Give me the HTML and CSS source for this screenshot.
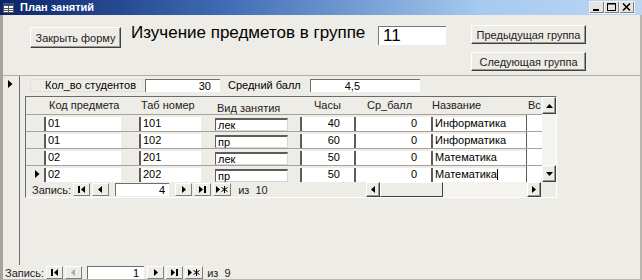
FILE: index.html
```html
<!DOCTYPE html>
<html lang="ru">
<head>
<meta charset="utf-8">
<title>План занятий</title>
<link rel="stylesheet" href="styles.css">
</head>
<body>
<div class="window">
  <div class="titlebar">
    <svg class="app-icon" width="11" height="10" viewBox="0 0 11 10">
      <rect x="0.5" y="0.5" width="10" height="9" fill="#fff" stroke="#555"/>
      <rect x="1" y="1" width="9" height="2" fill="#2a4aa0"/>
      <line x1="5.5" y1="3" x2="5.5" y2="9" stroke="#555"/>
      <line x1="1" y1="5.5" x2="10" y2="5.5" stroke="#555"/>
      <line x1="1" y1="7.5" x2="10" y2="7.5" stroke="#555"/>
    </svg>
    <span class="title">План занятий</span>
    <div class="wbtns">
      <span class="wbtn"><svg width="13" height="10" viewBox="0 0 13 10"><rect x="3" y="7" width="6" height="2" fill="#000"/></svg></span>
      <span class="wbtn"><svg width="13" height="10" viewBox="0 0 13 10"><rect x="2.5" y="1.5" width="8" height="7" fill="none" stroke="#000"/><line x1="2.5" y1="2" x2="10.5" y2="2" stroke="#000"/></svg></span>
      <span class="wbtn"><svg width="13" height="10" viewBox="0 0 13 10"><path d="M3 1.5 L10 8.5 M10 1.5 L3 8.5" stroke="#000" stroke-width="1.6"/></svg></span>
    </div>
  </div>
  <div class="client">
    <div class="form-header">
      <button class="btn btn-close">Закрыть форму</button>
      <div class="heading">Изучение предметов в группе</div>
      <div class="group-box">11</div>
      <div class="group-nav">
        <button class="btn btn-group">Предыдущая группа</button>
        <button class="btn btn-group">Следующая группа</button>
      </div>
    </div>
    <div class="detail">
      <div class="selector">
        <svg class="sel-arrow" width="5" height="8" viewBox="0 0 5 8"><path d="M0 0 L4.5 4 L0 8 Z" fill="#000"/></svg>
      </div>
      <div class="detail-body">
        <div class="stats">
          <div class="stat-label stat-label-1">Кол_во студентов</div>
          <div class="field field-num field-1">30</div>
          <div class="stat-label stat-label-2">Средний балл</div>
          <div class="field field-num field-2">4,5</div>
        </div>
        <div class="subform">
          <div class="sf-top">
            <div class="sf-main">
              <div class="sf-row sf-head">
                <div class="c c-sel"></div>
                <div class="c c1">Код предмета</div>
                <div class="gap g1"></div>
                <div class="c c2">Таб номер</div>
                <div class="gap g2"></div>
                <div class="c c3">Вид занятия</div>
                <div class="gap g3"></div>
                <div class="c c4">Часы</div>
                <div class="c c5">Ср_балл</div>
                <div class="c c6">Название</div>
                <div class="c c7">Вс</div>
              </div>
              <div class="sf-row rec">
                <div class="c c-sel"></div>
                <div class="c c1 cell">01</div>
                <div class="gap g1"></div>
                <div class="c c2 cell">101</div>
                <div class="gap g2"></div>
                <div class="c c3"><div class="box">лек</div></div>
                <div class="gap g3"></div>
                <div class="c c4 cell num">40</div>
                <div class="c c5 cell num">0</div>
                <div class="c c6 cell">Информатика</div>
                <div class="c c7 cell"></div>
              </div>
              <div class="sf-row rec">
                <div class="c c-sel"></div>
                <div class="c c1 cell">01</div>
                <div class="gap g1"></div>
                <div class="c c2 cell">102</div>
                <div class="gap g2"></div>
                <div class="c c3"><div class="box">пр</div></div>
                <div class="gap g3"></div>
                <div class="c c4 cell num">60</div>
                <div class="c c5 cell num">0</div>
                <div class="c c6 cell">Информатика</div>
                <div class="c c7 cell"></div>
              </div>
              <div class="sf-row rec">
                <div class="c c-sel"></div>
                <div class="c c1 cell">02</div>
                <div class="gap g1"></div>
                <div class="c c2 cell">201</div>
                <div class="gap g2"></div>
                <div class="c c3"><div class="box">лек</div></div>
                <div class="gap g3"></div>
                <div class="c c4 cell num">50</div>
                <div class="c c5 cell num">0</div>
                <div class="c c6 cell">Математика</div>
                <div class="c c7 cell"></div>
              </div>
              <div class="sf-row rec">
                <div class="c c-sel"><svg class="row-arrow" width="5" height="8" viewBox="0 0 5 8"><path d="M0 0 L4.5 4 L0 8 Z" fill="#000"/></svg></div>
                <div class="c c1 cell">02</div>
                <div class="gap g1"></div>
                <div class="c c2 cell">202</div>
                <div class="gap g2"></div>
                <div class="c c3"><div class="box">пр</div></div>
                <div class="gap g3"></div>
                <div class="c c4 cell num">50</div>
                <div class="c c5 cell num">0</div>
                <div class="c c6 cell">Математика<span class="caret"></span></div>
                <div class="c c7 cell"></div>
              </div>
            </div>
            <div class="vscroll">
              <div class="sb-btn"><svg width="7" height="4" viewBox="0 0 7 4"><path d="M0 4 L3.5 0 L7 4 Z" fill="#000"/></svg></div>
              <div class="sb-track"></div>
              <div class="sb-btn"><svg width="7" height="4" viewBox="0 0 7 4"><path d="M0 0 L3.5 4 L7 0 Z" fill="#000"/></svg></div>
            </div>
          </div>
          <div class="sf-nav">
            <div class="recnav">
              <span class="nav-label">Запись:</span>
              <span class="nbtn"><svg width="9" height="7" viewBox="0 0 9 7"><rect x="1" y="0" width="2" height="7" fill="#000"/><path d="M8 0 L4 3.5 L8 7 Z" fill="#000"/></svg></span>
              <span class="nbtn"><svg width="9" height="7" viewBox="0 0 9 7"><path d="M6 0 L2 3.5 L6 7 Z" fill="#000"/></svg></span>
              <span class="nbox nbox-sub">4</span>
              <span class="nbtn"><svg width="9" height="7" viewBox="0 0 9 7"><path d="M3 0 L7 3.5 L3 7 Z" fill="#000"/></svg></span>
              <span class="nbtn"><svg width="9" height="7" viewBox="0 0 9 7"><path d="M1 0 L5 3.5 L1 7 Z" fill="#000"/><rect x="6" y="0" width="2" height="7" fill="#000"/></svg></span>
              <span class="nbtn nbtn-new"><svg width="12" height="7" viewBox="0 0 12 7"><path d="M0 0 L4 3.5 L0 7 Z" fill="#000"/><path d="M8.5 0 V7 M5.5 1.5 L11.5 5.5 M11.5 1.5 L5.5 5.5" stroke="#000" stroke-width="1"/></svg></span>
              <span class="nav-count nav-count-sub">из&nbsp; 10</span>
            </div>
            <div class="hscroll">
              <div class="hs-btn"><svg width="4" height="7" viewBox="0 0 4 7"><path d="M4 0 L0 3.5 L4 7 Z" fill="#000"/></svg></div>
              <div class="hs-thumb"></div>
              <div class="hs-track"></div>
              <div class="hs-btn"><svg width="4" height="7" viewBox="0 0 4 7"><path d="M0 0 L4 3.5 L0 7 Z" fill="#000"/></svg></div>
            </div>
            <div class="sf-corner"></div>
          </div>
        </div>
      </div>
    </div>
    <div class="recnav main-nav">
      <span class="nav-label">Запись:</span>
      <span class="nbtn"><svg width="9" height="7" viewBox="0 0 9 7"><rect x="1" y="0" width="2" height="7" fill="#000"/><path d="M8 0 L4 3.5 L8 7 Z" fill="#000"/></svg></span>
      <span class="nbtn disabled"><svg width="9" height="7" viewBox="0 0 9 7"><path d="M6 0 L2 3.5 L6 7 Z" fill="#a8a8a8"/></svg></span>
      <span class="nbox nbox-main">1</span>
      <span class="nbtn"><svg width="9" height="7" viewBox="0 0 9 7"><path d="M3 0 L7 3.5 L3 7 Z" fill="#000"/></svg></span>
      <span class="nbtn"><svg width="9" height="7" viewBox="0 0 9 7"><path d="M1 0 L5 3.5 L1 7 Z" fill="#000"/><rect x="6" y="0" width="2" height="7" fill="#000"/></svg></span>
      <span class="nbtn nbtn-new"><svg width="12" height="7" viewBox="0 0 12 7"><path d="M0 0 L4 3.5 L0 7 Z" fill="#000"/><path d="M8.5 0 V7 M5.5 1.5 L11.5 5.5 M11.5 1.5 L5.5 5.5" stroke="#000" stroke-width="1"/></svg></span>
      <span class="nav-count nav-count-main">из&nbsp; 9</span>
    </div>
  </div>
</div>
</body>
</html>
```

FILE: styles.css
```css
* { box-sizing: border-box; }
html, body { margin: 0; padding: 0; }
body {
  width: 642px;
  height: 280px;
  overflow: hidden;
  font-family: "Liberation Sans", Arial, sans-serif;
  font-size: 11px;
  color: #000;
  background: #eeece6;
}
.window {
  width: 642px;
  height: 280px;
  display: flex;
  flex-direction: column;
  background: #eeece6;
}

/* title bar */
.titlebar {
  height: 15px;
  flex: none;
  display: flex;
  align-items: center;
  padding-left: 3px;
  background: linear-gradient(to right, #0a246a 0%, #3f6cb4 35%, #a6caf0 75%, #bcd6f2 100%);
  color: #fff;
}
.app-icon { flex: none; }
.title {
  margin-left: 6px;
  font-weight: bold;
  font-size: 11px;
  line-height: 13px;
}
.wbtns {
  margin-left: auto;
  margin-right: 7px;
  display: flex;
  gap: 1px;
  background: #f2f2f2;
  padding: 1px;
}
.wbtn {
  width: 14px;
  height: 11px;
  display: flex;
  align-items: center;
  justify-content: center;
  background: #e6e4de;
  border-right: 1px solid #808080;
  border-bottom: 1px solid #808080;
}

/* client */
.client {
  flex: 1;
  display: flex;
  flex-direction: column;
  border-left: 3px solid #a5a39c;
  border-right: 2px solid #b8b6b0;
  border-bottom: 1px solid #b8b6b0;
}

.btn {
  font-family: "Liberation Sans", Arial, sans-serif;
  font-size: 11px;
  color: #222;
  background: #eeece6;
  border: 1px solid;
  border-color: #ffffff #404040 #404040 #ffffff;
  box-shadow: inset -1px -1px 0 #9a9890;
  padding: 0;
  line-height: 16px;
  cursor: default;
}

.form-header {
  height: 61px;
  flex: none;
  display: flex;
  align-items: flex-start;
  padding-left: 27px;
  border-bottom: 1px solid #b0aea7;
}
.btn-close {
  width: 91px;
  height: 21px;
  margin-top: 12px;
}
.heading {
  width: 247px;
  flex: none;
  margin-left: 10px;
  margin-top: 8px;
  font-size: 17px;
  line-height: 20px;
  white-space: nowrap;
}
.group-box {
  width: 68px;
  height: 19px;
  margin-top: 11px;
  background: #fff;
  border-top: 1px solid #7a7a7a;
  border-left: 1px solid #7a7a7a;
  font-size: 17px;
  line-height: 18px;
  padding-left: 4px;
}
.group-nav {
  margin-left: 25px;
  margin-top: 10px;
  display: flex;
  flex-direction: column;
  gap: 8px;
}
.btn-group {
  width: 115px;
  height: 19px;
}

/* detail */
.detail {
  height: 189px;
  flex: none;
  display: flex;
}
.selector {
  width: 17px;
  flex: none;
  border-right: 1px solid #6e6e6e;
  padding-left: 5px;
  padding-top: 4px;
}
.sel-arrow { display: block; }
.detail-body {
  flex: 1;
  padding-left: 5px;
  padding-top: 3px;
}
.stats {
  display: flex;
  height: 13px;
  align-items: stretch;
}
.stat-label {
  line-height: 13px;
  white-space: nowrap;
}
.stat-label-1 {
  margin-left: 5px;
  width: 113px;
  text-align: right;
  padding-right: 6px;
  border: 1px solid #e2e0da;
  line-height: 11px;
}
.field {
  background: #fff;
  border-top: 1px solid #6e6e6e;
  border-left: 1px solid #6e6e6e;
  line-height: 12px;
}
.field-num { text-align: right; }
.field-1 {
  width: 75px;
  margin-left: 2px;
  padding-right: 9px;
}
.stat-label-2 {
  margin-left: 8px;
  width: 82px;
}
.field-2 {
  width: 110px;
  padding-right: 60px;
}

/* subform */
.subform {
  margin-top: 4px;
  width: 532px;
  border: 1px solid;
  border-color: #6a6a6a #ffffff #ffffff #6a6a6a;
  display: flex;
  flex-direction: column;
}
.sf-top { display: flex; }
.sf-main { width: 516px; flex: none; }
.sf-row {
  display: flex;
  height: 17px;
}
.sf-head { line-height: 17px; color: #222; }
.rec { border-top: 1px solid #a4a29b; }
.c { flex: none; white-space: nowrap; overflow: hidden; }
.c-sel { width: 18px; position: relative; }
.row-arrow { position: absolute; left: 9px; top: 4px; }
.c1 { width: 77px; }
.g1 { width: 18px; }
.c2 { width: 62px; }
.g2 { width: 14px; }
.c3 { width: 73px; }
.g3 { width: 12px; }
.c4 { width: 54px; }
.c5 { width: 77px; }
.c6 { width: 95px; }
.c7 { width: 16px; }
.sf-head .c1 { padding-left: 5px; }
.sf-head .c2 { padding-left: 2px; }
.sf-head .c3 { padding-left: 2px; }
.sf-head .c4 { padding-left: 14px; }
.sf-head .c5 { padding-left: 13px; }
.sf-head .c6 { padding-left: 1px; }
.sf-head .c7 { padding-left: 2px; }

.cell {
  margin-top: 2px;
  height: 14px;
  background: #fff;
  border-left: 2px solid #5c5c5c;
  padding-left: 2px;
  line-height: 13px;
}
.cell.num { text-align: right; padding-right: 14px; }
.c7.cell { border-left: 1px solid #5c5c5c; margin-top: 0; height: 16px; }
.c3 { padding-top: 3px; }
.box {
  height: 13px;
  background: #fff;
  border: 1px solid;
  border-color: #5c5c5c #d8d6d0 #d8d6d0 #5c5c5c;
  border-top-width: 2px;
  padding-left: 2px;
  line-height: 11px;
}
.caret {
  display: inline-block;
  width: 1px;
  height: 11px;
  background: #000;
  vertical-align: -2px;
}

.vscroll {
  width: 14px;
  flex: none;
  display: flex;
  flex-direction: column;
  background: #f4f3ef;
}
.sb-btn {
  height: 17px;
  flex: none;
  display: flex;
  align-items: center;
  justify-content: center;
  background: #eeece6;
  border: 1px solid;
  border-color: #ffffff #404040 #404040 #ffffff;
  box-shadow: inset -1px -1px 0 #9a9890;
}
.sb-track { flex: 1; }

.sf-nav {
  height: 15px;
  display: flex;
  align-items: center;
}
.recnav {
  display: flex;
  align-items: center;
  height: 100%;
}
.sf-nav .recnav { width: 340px; padding-left: 6px; }
.nav-label { margin-right: 2px; color: #222; }
.nbtn {
  width: 17px;
  height: 13px;
  flex: none;
  display: flex;
  align-items: center;
  justify-content: center;
  border-right: 1px solid #808080;
  border-bottom: 1px solid #808080;
  border-left: 1px solid #fff;
  border-top: 1px solid #fff;
  margin-right: 2px;
}
.nbtn-new { width: 18px; }
.nbox {
  height: 13px;
  flex: none;
  background: #fff;
  border-top: 1px solid #6e6e6e;
  border-left: 1px solid #6e6e6e;
  text-align: right;
  line-height: 12px;
}
.nbox-sub { width: 54px; padding-right: 4px; margin: 0 6px 0 4px; }
.nav-count { color: #222; }
.nav-count-sub { margin-left: 5px; }

.hscroll {
  width: 175px;
  height: 15px;
  display: flex;
  background: #f4f3ef;
}
.hs-btn {
  width: 14px;
  flex: none;
  display: flex;
  align-items: center;
  justify-content: center;
  background: #eeece6;
  border: 1px solid;
  border-color: #ffffff #404040 #404040 #ffffff;
  box-shadow: inset -1px -1px 0 #9a9890;
}
.hs-thumb {
  width: 63px;
  flex: none;
  background: #eeece6;
  border: 1px solid;
  border-color: #ffffff #404040 #404040 #ffffff;
}
.hs-track { flex: 1; }
.sf-corner { flex: 1; height: 15px; }

.main-nav {
  height: 14px;
  flex: none;
  padding-left: 2px;
  padding-top: 1px;
}
.nbox-main { width: 57px; padding-right: 5px; margin: 0 3px 0 3px; }
.nav-count-main { margin-left: 2px; }
```
